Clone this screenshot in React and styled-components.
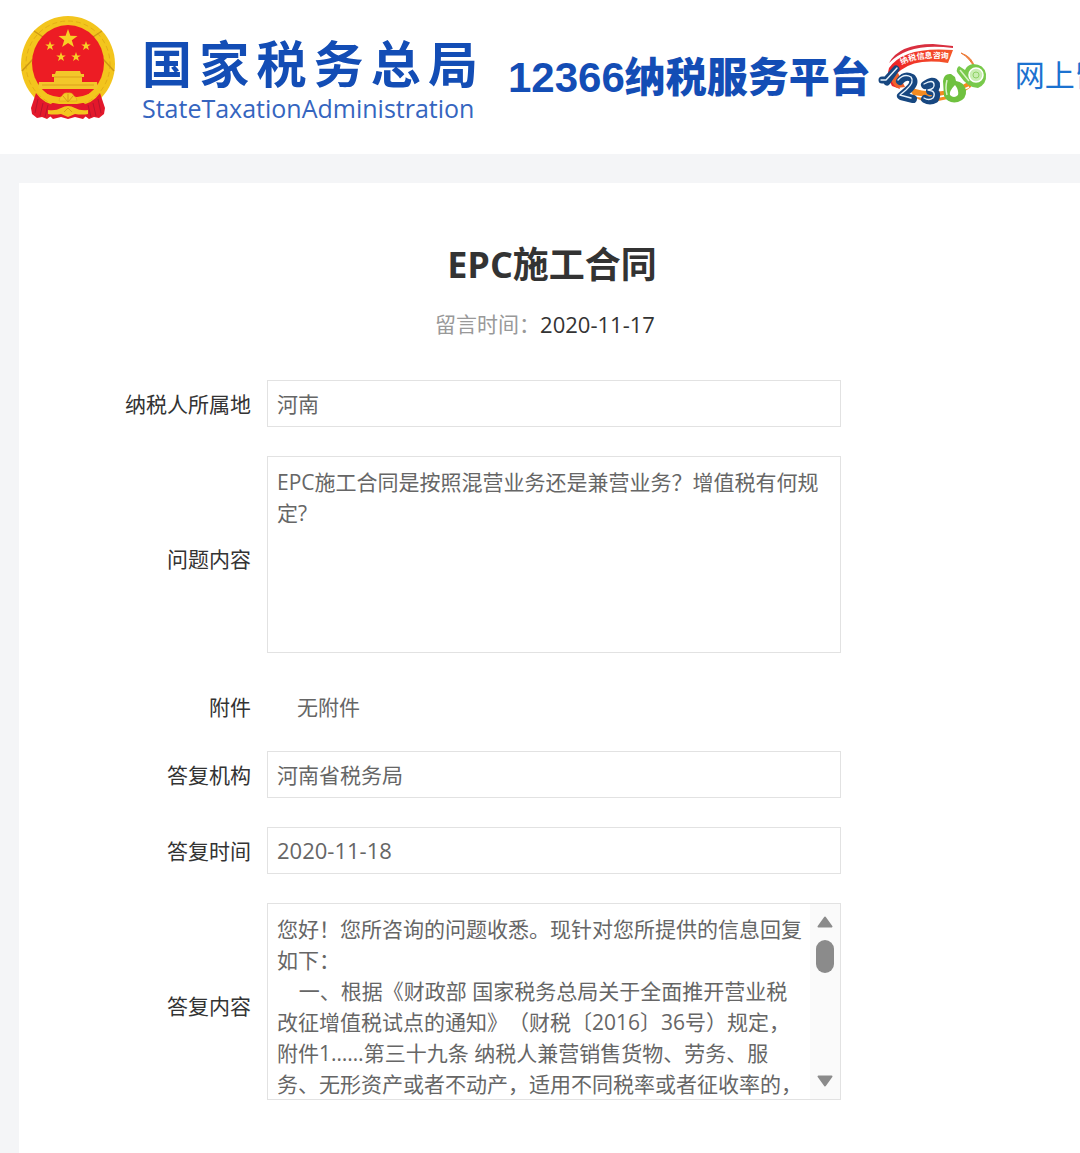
import React from "react";
import styled, { createGlobalStyle } from "styled-components";

const GlobalStyle = createGlobalStyle`
  * {
    box-sizing: border-box;
  }
  body {
    margin: 0;
    background: #f4f5f7;
    color: #333;
    font-family: "Open Sans", "Noto Sans CJK SC", sans-serif;
    font-size: 21px;
    line-height: 31px;
    text-spacing-trim: space-all;
    overflow-x: hidden;
  }
`;

const Header = styled.header`
  display: flex;
  align-items: flex-start;
  height: 154px;
  padding-left: 20px;
  background: #fff;
  color: #134db5;
  white-space: nowrap;
  overflow: hidden;
`;

const Emblem = styled.svg`
  flex: none;
  width: 97px;
  height: 106px;
  margin-top: 15px;
`;

const Agency = styled.div`
  flex: none;
  width: 336px;
  margin: 34px 0 0 25px;
`;

const AgencyName = styled.div`
  font-size: 50px;
  font-weight: 700;
  line-height: 60px;
  text-align-last: justify;
`;

const AgencyLatin = styled.div`
  font-size: 25px;
  line-height: 28px;
  color: #3565bf;
`;

const Platform = styled.div`
  flex: none;
  margin: 46px 0 0 30px;
  font-size: 41px;
  font-weight: 900;
  line-height: 60px;
`;

const PlatformNumber = styled.span`
  font-family: "Liberation Sans", sans-serif;
  font-size: 42px;
  font-weight: 700;
`;

const HotlineLogo = styled.svg`
  flex: none;
  width: 110px;
  height: 66px;
  margin: 42px 0 0 6px;
`;

const NavLink = styled.a`
  flex: none;
  margin: 54px 0 0 28px;
  font-size: 30px;
  line-height: 42px;
  color: #1b72d0;
  text-decoration: none;
`;

const Panel = styled.main`
  margin: 29px -5px 0 19px;
  padding: 57px 244px 54px 0;
  background: #fff;
`;

const Heading = styled.div`
  margin: 0 -244px 40px 0;
  text-align: center;
`;

const Title = styled.h1`
  margin: 0 0 20px;
  font-size: 36px;
  line-height: 49px;
`;

const Posted = styled.p`
  display: flex;
  justify-content: center;
  margin: 0;
  padding-right: 14px;
  color: #999;
`;

const PostedDate = styled.time`
  font-size: 22px;
  color: #333;
`;

const Row = styled.div`
  display: grid;
  grid-template-columns: 232px 1fr;
  column-gap: 16px;
  align-items: center;
  margin-bottom: ${(props) => props.$gap || 29}px;
`;

const Label = styled.label`
  padding-top: ${(props) => (props.$tall ? 10 : 2)}px;
  text-align: right;
`;

const Input = styled.input`
  width: 100%;
  height: 47px;
  padding: 0 9px 2px;
  border: 1px solid #e2e2e2;
  border-radius: 0;
  outline: none;
  background: #fff;
  color: #666;
  font-family: inherit;
  font-size: ${(props) => (props.$date ? 22 : 21)}px;
`;

const TextBox = styled.div`
  display: flex;
  border: 1px solid #e2e2e2;
`;

const TextArea = styled.textarea`
  display: block;
  flex: 1;
  min-width: 0;
  height: 195px;
  padding: 10px 4px 9px 9px;
  border: none;
  outline: none;
  resize: none;
  background: #fff;
  color: #666;
  font: inherit;
  scrollbar-width: none;
`;

const ScrollTrack = styled.div`
  display: flex;
  flex-direction: column;
  align-items: center;
  width: 30px;
  padding: 12px 0;
  background: #fafafa;
`;

const ScrollThumb = styled.div`
  width: 18px;
  height: 33px;
  margin: 12px 0 auto;
  border-radius: 9px;
  background: #8b8b8b;
`;

const Attachment = styled.output`
  padding: 2px 0 0 30px;
  color: #666;
`;

const question =
  "EPC施工合同是按照混营业务还是兼营业务？增值税有何规定?";

const answer = `您好！您所咨询的问题收悉。现针对您所提供的信息回复如下：
    一、根据《财政部 国家税务总局关于全面推开营业税改征增值税试点的通知》（财税〔2016〕36号）规定，附件1……第三十九条 纳税人兼营销售货物、劳务、服务、无形资产或者不动产，适用不同税率或者征收率的，`;

const starPath =
  "M0-10 2.4-3.2 9.5-3.1 3.8 1.2 5.9 8.1 0 4 -5.9 8.1 -3.8 1.2 -9.5-3.1 -2.4-3.2Z";

const stars = [
  { x: 48, y: 24, size: 1 },
  { x: 30, y: 31, size: 0.5 },
  { x: 66, y: 31, size: 0.5 },
  { x: 41, y: 42, size: 0.5 },
  { x: 56, y: 42, size: 0.5 },
];

const NationalEmblem = () => (
  <Emblem viewBox="0 0 97 106" role="img" aria-label="国徽">
    <ellipse cx="48" cy="49" rx="47" ry="48" fill="#f3c51d" />
    <ellipse cx="48" cy="49" rx="42" ry="43" fill="none" stroke="#e3ae17" strokeDasharray="5 3" />
    <path d="M2 56 13 44M94 56 83 44M14 16l9 6M82 16l-9 6" stroke="#cf9a14" strokeWidth="1.5" />
    <ellipse cx="48" cy="48" rx="36" ry="38" fill="#ed1c24" />
    {stars.map((star) => (
      <path
        key={`${star.x}-${star.y}`}
        d={starPath}
        fill="#f8cf25"
        transform={`translate(${star.x} ${star.y}) scale(${star.size})`}
      />
    ))}
    <path d="M36 56h24l1 3h3v3h-2v5h15l1 7H18l1-7h15v-5h-2v-3h3Z" fill="#f3c62a" />
    <path d="M34 62h28M22 70h52" stroke="#dda01b" />
    {/* drapes under the wreath */}
    <path d="M16 78q8 12 24 13v8l-9 2-4 3-5-2-5 1-5-4-1-6Z" fill="#e3182b" />
    <path d="M80 78q-8 12-24 13v8l9 2 4 3 5-2 5 1 5-4 1-6Z" fill="#e3182b" />
    <path d="M32 88h32l6 9-7 7-8-2-7 2-7-2-8 2-7-7Z" fill="#e3182b" />
    <path d="M17 78q8 9 22 11h18q14-2 22-11l-1-5q-9 8-21 9H39q-12-1-21-9Z" fill="#f3c51d" />
    <path d="M39 86q0-4 3-5 2-4 6-3 4-1 6 3 3 1 3 5Z" fill="#f5ca28" stroke="#e0a51a" strokeWidth="0.6" />
    <path d="M43 81l5 6 5-6M48 79v8" stroke="#d99b16" fill="none" />
    <path d="M28 95q8 1 13-2 7-4 14 0 5 3 13 2v4q-6 1-13 0l-7 3-7-3q-7 1-13 0Z" fill="#f4c51f" />
    <path d="M44 97l4-4 4 4" stroke="#d99b16" fill="none" />
    <path d="M18 84l-3 14M23 88l-3 13M28 90l-3 12M78 84l3 14M73 88l3 13M68 90l3 12" stroke="#b9152b" fill="none" />
  </Emblem>
);

const Hotline = () => (
  <HotlineLogo viewBox="0 0 110 66" role="img" aria-label="12366">
    <defs>
      <linearGradient id="band" x1="0" x2="1">
        <stop offset="0" stopColor="#ed2028" />
        <stop offset="1" stopColor="#f5582a" />
      </linearGradient>
    </defs>
    <path d="M12 21Q22 2 56 2l20 2v2Q32 0 12 21Z" fill="#d92f3f" />
    <path d="M12 26Q27 4 76 8l-5 13Q40 16 24 28l-6 5 5 14-8-3Q9 34 12 26Z" fill="url(#band)" />
    <path id="slogan" d="M25 23Q38 14 73 17" fill="none" />
    <text fill="#fff" fontSize="8" fontWeight="700" fontFamily="Noto Sans CJK SC">
      <textPath href="#slogan">纳税信息咨询</textPath>
    </text>
    <path d="M13 32l8-1 7 14-8 1Q13 40 13 32Z" fill="#f0612a" />
    <path d="M32 45q26 9 50 0l16-9-4 9q-18 14-44 15-14-2-18-15Z" fill="#f58b20" />
    <path d="M38 54q28 5 54-9" stroke="#fff" strokeWidth="1.5" fill="none" />
    <path d="M84 11q12 4 14 16-5-11-14-16Z" stroke="#ed7d3b" fill="#ed7d3b" />
    <g fill="none" strokeLinecap="round" strokeLinejoin="round">
      <path d="M5 38h4L19 27 10 40" stroke="#174780" strokeWidth="7" />
      <path d="M23 39q5-7 12-3 4 5-4 12l-7 6 12 3" stroke="#174780" strokeWidth="8" />
      <path d="M48 43q8-6 11-1 1 5-6 7 9 0 5 8-5 3-10 0" stroke="#174780" strokeWidth="8" />
      <path
        d="M4 38h5L20 26M21 38q6-7 13-3 4 5-5 13l-6 5 11 3M47 42q9-5 10 0 1 5-6 6 9 1 5 8-4 3-9 0"
        stroke="#e6f2fc"
        strokeWidth="1.4"
      />
    </g>
    <path d="M74 32q-7-1-8 7l1 15q4 8 14 6 9-3 8-12-2-8-10-9l-1-4Z" fill="#6fc13f" />
    <path d="M78 43q-6 6-5 10 4 4 8 0 1-5-3-10Z" fill="#fff" />
    <path d="M70 38q-2 8 0 15" stroke="#d9f3c7" strokeWidth="1.5" fill="none" />
    <path d="M82 24q-5 4 1 10 8 12 18 12 9-4 8-14-2-10-13-10-6 1-8 6Z" fill="#78c94b" />
    <circle cx="99" cy="33" r="7" fill="#c9edb2" stroke="#fff" strokeWidth="1.5" />
    <circle cx="99" cy="33" r="3" fill="none" stroke="#8fd165" />
    <path d="M83 28l9 11" stroke="#d9f3c7" strokeWidth="1.5" />
  </HotlineLogo>
);

const ScrollArrow = ({ down }) => (
  <svg width="16" height="12" viewBox="0 0 16 12" aria-hidden="true">
    <path
      d="M8 1.5 14.5 10.5h-13Z"
      fill="#8b8b8b"
      stroke="#8b8b8b"
      strokeWidth="2"
      strokeLinejoin="round"
      transform={down ? "rotate(180 8 6)" : undefined}
    />
  </svg>
);

const App = () => {
  return (
    <>
      <GlobalStyle />
      <Header>
        <NationalEmblem />
        <Agency>
          <AgencyName>国家税务总局</AgencyName>
          <AgencyLatin>StateTaxationAdministration</AgencyLatin>
        </Agency>
        <Platform>
          <PlatformNumber>12366</PlatformNumber>纳税服务平台
        </Platform>
        <Hotline />
        <NavLink href="#message">网上留言</NavLink>
      </Header>
      <Panel id="message">
        <Heading>
          <Title>EPC施工合同</Title>
          <Posted>
            留言时间：<PostedDate>2020-11-17</PostedDate>
          </Posted>
        </Heading>
        <Row>
          <Label htmlFor="region">纳税人所属地</Label>
          <Input id="region" defaultValue="河南" readOnly />
        </Row>
        <Row $gap={37}>
          <Label htmlFor="question" $tall>
            问题内容
          </Label>
          <TextBox>
            <TextArea id="question" defaultValue={question} readOnly />
          </TextBox>
        </Row>
        <Row $gap={28}>
          <Label htmlFor="attachment">附件</Label>
          <Attachment id="attachment">无附件</Attachment>
        </Row>
        <Row>
          <Label htmlFor="office">答复机构</Label>
          <Input id="office" defaultValue="河南省税务局" readOnly />
        </Row>
        <Row>
          <Label htmlFor="replied">答复时间</Label>
          <Input id="replied" defaultValue="2020-11-18" readOnly $date />
        </Row>
        <Row>
          <Label htmlFor="answer" $tall>
            答复内容
          </Label>
          <TextBox>
            <TextArea id="answer" defaultValue={answer} readOnly />
            <ScrollTrack>
              <ScrollArrow />
              <ScrollThumb />
              <ScrollArrow down />
            </ScrollTrack>
          </TextBox>
        </Row>
      </Panel>
    </>
  );
};

export default App;
